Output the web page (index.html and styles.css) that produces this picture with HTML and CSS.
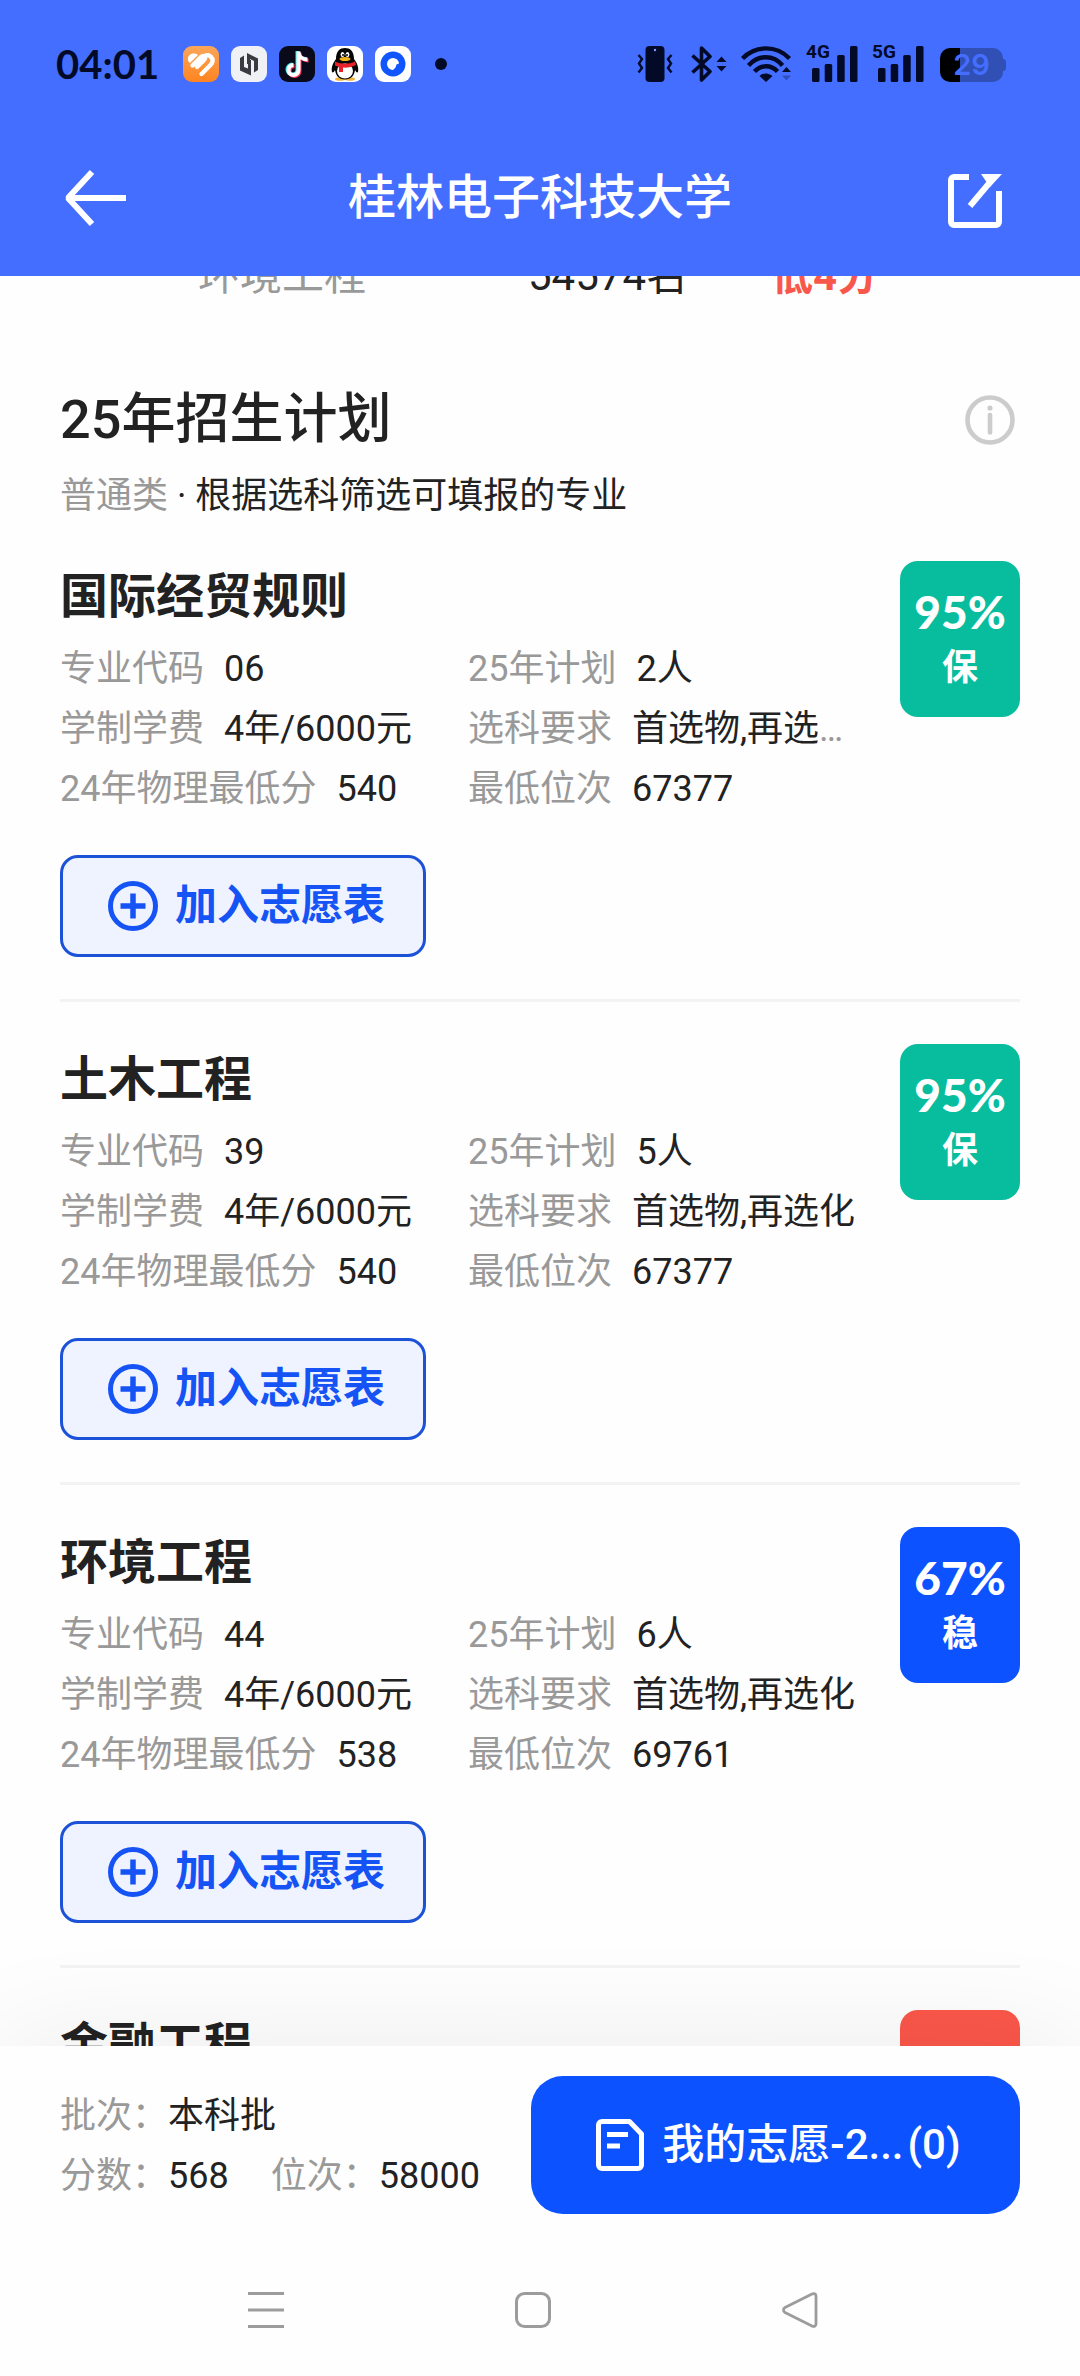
FILE: index.html
```html
<!DOCTYPE html>
<html lang="zh-CN">
<head>
<meta charset="utf-8">
<meta name="viewport" content="width=device-width, initial-scale=1">
<title>桂林电子科技大学</title>
<link rel="stylesheet" href="styles.css">
</head>
<body>
<svg class="sprite" aria-hidden="true">
  <symbol id="plus-circle" viewBox="0 0 50 50">
    <circle cx="25" cy="25" r="22.5" fill="none" stroke="currentColor" stroke-width="5"/>
    <path d="M25 12.5v25M12.5 25h25" stroke="currentColor" stroke-width="5.5"/>
  </symbol>
  <symbol id="bars" viewBox="0 0 46 36">
    <rect x="0" y="22" width="7.5" height="14" rx="1.5"/>
    <rect x="12.7" y="18" width="7.5" height="18" rx="1.5"/>
    <rect x="25.2" y="9" width="7.5" height="27" rx="1.5"/>
    <rect x="38" y="0" width="7.5" height="36" rx="1.5"/>
  </symbol>
</svg>
<div class="app">
  <header class="header">
    <div class="status">
      <span class="clock">04:01</span>
      <div class="apps">
        <svg viewBox="0 0 36 36" width="36" height="36">
          <defs><linearGradient id="orange" x1="0" y1="0" x2="0" y2="1"><stop offset="0" stop-color="#fba65a"/><stop offset="1" stop-color="#ff8420"/></linearGradient></defs>
          <rect width="36" height="36" rx="9" fill="url(#orange)"/>
          <path d="M5 14c-1-6 6-8 10-5l-8 8c-1-1-2-2-2-3z" fill="#fff"/>
          <g fill="none" stroke="#fff" stroke-width="4.400" stroke-linecap="round" stroke-linejoin="round">
            <path d="M9.500 19.500l8.500-8.500c2-2 4.500-1 4 1.500-.3 1-1 1.500-8 8.500"/>
            <path d="M18.500 28l9-9c2.500-2.500 3-6 .5-8"/>
            <path d="M22 10c2-1.500 4.500-1 6 1"/>
          </g>
        </svg>
        <svg viewBox="0 0 36 36" width="36" height="36">
          <rect width="36" height="36" rx="9" fill="#f0f1f5"/>
          <path d="M9 12l4-2.500V21l4 1.500V14h3v15.500L9 24.500zM16 7l11 5.500V24l-4 2.500V15l-4-2v5h-3z" fill="#393b42"/>
        </svg>
        <svg viewBox="0 0 36 36" width="36" height="36">
          <rect width="36" height="36" rx="9" fill="#0a0b1a"/>
          <g fill="none" stroke-width="4">
            <path d="M18.500 5v18.500a5 5 0 1 1-5-5M18.500 6c.5 4 4 7 9 7" stroke="#35e6e6"/>
            <path d="M20.500 6.500V25a5 5 0 1 1-5-5M20.500 7.500c.5 4 4 7 9 7" stroke="#f8375d"/>
            <path d="M19.500 5.500v18.500a5 5 0 1 1-5-5M19.500 6.500c.5 4 4 7 9 7" stroke="#fff"/>
          </g>
        </svg>
        <svg viewBox="0 0 36 36" width="36" height="36">
          <rect width="36" height="36" rx="9" fill="#fff"/>
          <ellipse cx="13" cy="33" rx="5" ry="1.800" fill="#f0b43a"/><ellipse cx="23" cy="33" rx="5" ry="1.800" fill="#f0b43a"/>
          <path d="M9 13C9 5 13 2 18 2s9 3 9 11c3 4 5 8 4 13-1 1-2 0-3-2-1 6-4 9.500-10 9.500S9 30 8 24c-1 2-2 3-3 2-1-5 1-9 4-13z" fill="#050505"/>
          <ellipse cx="18" cy="25" rx="8" ry="7.500" fill="#fff"/>
          <path d="M8 15.500c6 3 14 3 20 0l1 3.500c-4 2-9 3-13 2.500V26h-4v-5l-4-1.500z" fill="#e8202a"/>
          <ellipse cx="15.500" cy="8.500" rx="1.900" ry="2.600" fill="#fff"/><ellipse cx="20.500" cy="8.500" rx="1.900" ry="2.600" fill="#fff"/>
          <circle cx="16" cy="9" r="1"/><circle cx="20" cy="9" r="1"/>
          <ellipse cx="18" cy="13" rx="5.500" ry="2" fill="#f5b31a"/>
        </svg>
        <svg viewBox="0 0 36 36" width="36" height="36">
          <rect width="36" height="36" rx="9" fill="#fff"/>
          <circle cx="18" cy="18" r="12.500" fill="#1155ff"/>
          <path d="M18 12a6 6 0 0 1 6 5.500l-2.500 1-1 3-2.500 2.500a6 6 0 1 1 0-12z" fill="#fff"/>
        </svg>
      </div>
      <span class="more-dot"></span>
      <div class="signals">
        <svg viewBox="0 0 40 36" width="40" height="36">
          <rect x="8.500" width="19" height="36" rx="4"/><circle cx="18" cy="4" r="1.200" fill="#7f9cff"/>
          <path d="M1.500 9l3.500 4-3 4.500 3 4.500-3.500 4.500M34.500 9L31 13l3 4.500-3 4.500 3.500 4.500" fill="none" stroke="currentColor" stroke-width="2.400"/>
        </svg>
        <svg viewBox="0 0 36 36" width="36" height="36">
          <path d="M1.500 9.500L19 25.500 10.500 34V2L19 10.500 1.500 26.500" fill="none" stroke="currentColor" stroke-width="3.600" stroke-linejoin="round"/>
          <path d="M25.500 16l5-5.500 5 5.500zM25.500 20l5 5.500 5-5.500z"/>
        </svg>
        <svg viewBox="0 0 51 36" width="51" height="36">
          <g fill="none" stroke="currentColor" stroke-width="4.400"><path d="M1.500 12.500c13-13.500 34-13.500 47 0M7.500 19.500c10-11 25-11 34 0M13.500 25.500c6.500-7 16.500-7 23 0"/></g>
          <path d="M18.500 30c4-3.500 9-3.500 13 0L25 36zM41 26l4.500-5 4.500 5z"/>
          <path d="M41 29.500l4.500 5 4.500-5z" opacity=".3"/>
        </svg>
        <div class="cell"><span>4G</span><svg width="46" height="36"><use href="#bars"/></svg></div>
        <div class="cell"><span>5G</span><svg width="46" height="36"><use href="#bars"/></svg></div>
        <div class="battery"><span>29</span></div>
      </div>
    </div>
    <nav class="titlebar">
      <a class="icon-link" href="#back" aria-label="返回">
        <svg viewBox="0 0 64 60" width="64" height="60" fill="none" stroke="#fff" stroke-width="6"><path d="M4 30h58M28 4L4 30l24 26" stroke-linejoin="bevel"/></svg>
      </a>
      <h1 class="title">桂林电子科技大学</h1>
      <a class="icon-link share" href="#share" aria-label="分享">
        <svg viewBox="0 0 54 54" width="54" height="54"><path d="M21 3H6a3 3 0 0 0-3 3v42a3 3 0 0 0 3 3h42a3 3 0 0 0 3-3V17" fill="none" stroke="#fff" stroke-width="6"/><path d="M22 32l21-25" stroke="#fff" stroke-width="6"/><path d="M33 0h21L42 13z" fill="#fff"/></svg>
      </a>
    </nav>
  </header>

  <main class="content">
    <div class="score-row">
      <span class="muted">环境工程</span><span>54574名</span><strong>低4分</strong>
    </div>

    <section class="plan">
      <div class="plan-head">
        <h2>25年招生计划</h2>
        <button class="info" type="button" aria-label="说明">
          <svg viewBox="0 0 50 50" width="50" height="50"><circle cx="25" cy="25" r="22.500" fill="none" stroke="#ccc" stroke-width="4.600"/><circle cx="25" cy="13" r="2.600" fill="#ccc"/><path d="M25 20v17.500" stroke="#ccc" stroke-width="4.600" stroke-linecap="round"/></svg>
        </button>
      </div>
      <p class="plan-sub"><span class="muted">普通类</span> · 根据选科筛选可填报的专业</p>

      <article class="major">
        <div class="major-body">
          <h3>国际经贸规则</h3>
          <dl class="facts">
            <div><dt>专业代码</dt><dd>06</dd></div>
            <div><dt>25年计划</dt><dd>2人</dd></div>
            <div><dt>学制学费</dt><dd>4年/6000元</dd></div>
            <div><dt>选科要求</dt><dd>首选物,再选不限</dd></div>
            <div><dt>24年物理最低分</dt><dd>540</dd></div>
            <div><dt>最低位次</dt><dd>67377</dd></div>
          </dl>
          <button class="add" type="button"><svg width="50" height="50"><use href="#plus-circle"/></svg>加入志愿表</button>
        </div>
        <div class="chance safe"><b>95%</b><span>保</span></div>
      </article>

      <article class="major">
        <div class="major-body">
          <h3>土木工程</h3>
          <dl class="facts">
            <div><dt>专业代码</dt><dd>39</dd></div>
            <div><dt>25年计划</dt><dd>5人</dd></div>
            <div><dt>学制学费</dt><dd>4年/6000元</dd></div>
            <div><dt>选科要求</dt><dd>首选物,再选化</dd></div>
            <div><dt>24年物理最低分</dt><dd>540</dd></div>
            <div><dt>最低位次</dt><dd>67377</dd></div>
          </dl>
          <button class="add" type="button"><svg width="50" height="50"><use href="#plus-circle"/></svg>加入志愿表</button>
        </div>
        <div class="chance safe"><b>95%</b><span>保</span></div>
      </article>

      <article class="major">
        <div class="major-body">
          <h3>环境工程</h3>
          <dl class="facts">
            <div><dt>专业代码</dt><dd>44</dd></div>
            <div><dt>25年计划</dt><dd>6人</dd></div>
            <div><dt>学制学费</dt><dd>4年/6000元</dd></div>
            <div><dt>选科要求</dt><dd>首选物,再选化</dd></div>
            <div><dt>24年物理最低分</dt><dd>538</dd></div>
            <div><dt>最低位次</dt><dd>69761</dd></div>
          </dl>
          <button class="add" type="button"><svg width="50" height="50"><use href="#plus-circle"/></svg>加入志愿表</button>
        </div>
        <div class="chance steady"><b>67%</b><span>稳</span></div>
      </article>

      <article class="major">
        <div class="major-body"><h3>金融工程</h3></div>
        <div class="chance reach"></div>
      </article>
    </section>
  </main>

  <footer class="dock">
    <dl class="profile">
      <div><dt>批次：</dt><dd>本科批</dd></div>
      <div><dt>分数：</dt><dd>568</dd><dt class="next">位次：</dt><dd>58000</dd></div>
    </dl>
    <button class="mine" type="button">
      <svg viewBox="0 0 48 52" width="48" height="52" fill="none" stroke="#fff" stroke-width="5"><path d="M6 2.500h27.500L45.500 15v31a3.500 3.500 0 0 1-3.500 3.500H6A3.500 3.500 0 0 1 2.500 46V6A3.500 3.500 0 0 1 6 2.500z" stroke-linejoin="round"/><path d="M11 15.500h21M11 27h13"/></svg>
      <span class="mine-name">我的志愿-2...</span><span>(0)</span>
    </button>
  </footer>

  <nav class="sysnav">
    <a href="#recent" aria-label="最近任务"><svg viewBox="0 0 36 36" width="36" height="36" stroke="#9c9c9c" stroke-width="3"><path d="M0 1.500h36M0 18h36M0 34.500h36"/></svg></a>
    <a href="#home" aria-label="主屏幕"><svg viewBox="0 0 36 36" width="36" height="36" fill="none" stroke="#9c9c9c" stroke-width="3"><rect x="1.500" y="1.500" width="33" height="33" rx="8"/></svg></a>
    <a href="#prev" aria-label="返回上一页"><svg viewBox="0 0 36 36" width="36" height="36" fill="none" stroke="#9c9c9c" stroke-width="2.800"><path d="M3 15.500L30 2c2-1 4 0 4 2v28c0 2-2 3-4 2L3 20.500c-2-1.200-2-3.800 0-5z" stroke-linejoin="round"/></svg></a>
  </nav>
</div>
</body>
</html>
```

FILE: styles.css
```css
* { box-sizing: border-box; }

body {
  margin: 0;
  background: #fefefe;
  color: #222;
  font-family: Roboto, "Noto Sans CJK SC", sans-serif;
  font-size: 36px;
  line-height: 60px;
}

h1, h2, h3, p, dl, dd { margin: 0; }
svg { display: block; flex: none; }
button { font: inherit; border: 0; padding: 0; background: none; cursor: pointer; }
.sprite { display: none; }
.muted, dt { color: #999; }

.app {
  display: flex;
  flex-direction: column;
  height: 100vh;
}

/* header */
.header { background: #446eff; flex: none; }

.status {
  display: flex;
  align-items: center;
  height: 118px;
  padding: 10px 74px 0 56px;
  color: #020a28;
}
.clock {
  width: 127px;
  font-family: Lato, sans-serif;
  font-size: 40px;
  font-weight: 700;
}
.apps { display: flex; gap: 12px; }
.more-dot {
  width: 12px;
  height: 12px;
  margin-left: 24px;
  border-radius: 50%;
  background: currentColor;
}
.signals {
  display: flex;
  align-items: center;
  gap: 14px;
  margin-left: auto;
  fill: currentColor;
}
.cell {
  position: relative;
  padding-left: 6px;
}
.cell span {
  position: absolute;
  left: 0;
  top: -4px;
  font-size: 19px;
  line-height: 20px;
  font-weight: 700;
}
.battery {
  position: relative;
  width: 63px;
  height: 34px;
  margin: 2px 3px 0 2px;
  border-radius: 10px;
  background: linear-gradient(90deg, #000 20px, #3150b5 20px);
  color: #446eff;
  font: 600 29px/34px Inter, sans-serif;
  text-align: center;
}
.battery::after {
  content: "";
  position: absolute;
  right: -3px;
  top: 11px;
  width: 3px;
  height: 12px;
  border-radius: 0 3px 3px 0;
  background: #3150b5;
}

.titlebar {
  display: grid;
  grid-template-columns: 1fr auto 1fr;
  align-items: center;
  height: 158px;
  padding: 2px 72px 0;
}
.icon-link { margin-left: -8px; }
.share { justify-self: end; margin: 6px 6px 0 0; }
.title {
  color: #fff;
  font-size: 48px;
  font-weight: 500;
}

/* scrolling content */
.content {
  flex: 1;
  min-height: 0;
  overflow: hidden;
}
.score-row {
  display: grid;
  grid-template-columns: 330px 243px 1fr;
  margin-top: -30px;
  padding-left: 198px;
  font-size: 42px;
}
.score-row strong { color: #f8584c; }

.plan { padding: 76px 60px 0; }
.plan-head {
  display: flex;
  justify-content: space-between;
  align-items: center;
  height: 76px;
}
.plan-head h2 {
  font-size: 54px;
  line-height: 72px;
  font-weight: 500;
}
.info { margin-right: 5px; }
.plan-sub {
  padding-top: 8px;
  line-height: 60px;
}

.major {
  display: flex;
  justify-content: space-between;
  align-items: flex-start;
  gap: 40px;
  padding: 42px 0;
  border-bottom: 3px solid #f3f3f3;
}
.plan-sub + .major { padding-top: 35px; }
.major-body { flex: 1; min-width: 0; }
.major h3 {
  font-size: 48px;
  line-height: 72px;
  font-weight: 700;
}
.facts {
  display: grid;
  grid-template-columns: 51% 49%;
  margin-top: 6px;
}
.facts > div {
  overflow: hidden;
  white-space: nowrap;
  text-overflow: ellipsis;
  color: #999;
}
.facts dt, .facts dd { display: inline; }
.facts dd { color: #222; margin-left: 20px; }

.add {
  display: flex;
  align-items: center;
  gap: 17px;
  height: 102px;
  margin-top: 36px;
  padding: 0 38px 0 45px;
  border: 3px solid #1c52d8;
  border-radius: 18px;
  background: #eff3ff;
  color: #1553f5;
  font-size: 42px;
  font-weight: 700;
}

.chance {
  display: flex;
  flex-direction: column;
  align-items: center;
  width: 120px;
  height: 156px;
  padding-top: 23px;
  border-radius: 18px;
  color: #fff;
  font-weight: 700;
  line-height: 56px;
}
.chance b { font-family: Lato, sans-serif; font-size: 46px; }
.safe { background: #08bd9d; }
.steady { background: #0c52ff; }
.reach { background: #fb574a; }

/* bottom dock */
.dock {
  display: flex;
  flex: none;
  justify-content: space-between;
  align-items: center;
  padding: 30px 60px;
  background: #fefefe;
  box-shadow: 0 0 120px rgba(0, 0, 0, .08);
}
.profile { padding-top: 2px; }
.profile dt, .profile dd { display: inline-block; }
.profile .next { margin-left: 42px; }
.mine {
  display: flex;
  align-items: center;
  justify-content: center;
  width: 489px;
  height: 138px;
  padding-left: 6px;
  border-radius: 32px;
  background: #0c52ff;
  color: #fff;
  font-size: 42px;
  font-weight: 500;
}
.mine-name { margin: 0 4px 0 18px; }

.sysnav {
  position: relative;
  display: flex;
  flex: none;
  justify-content: space-around;
  align-items: center;
  height: 132px;
  padding: 0 147px 0 132px;
  background: #fefefe;
}
```
